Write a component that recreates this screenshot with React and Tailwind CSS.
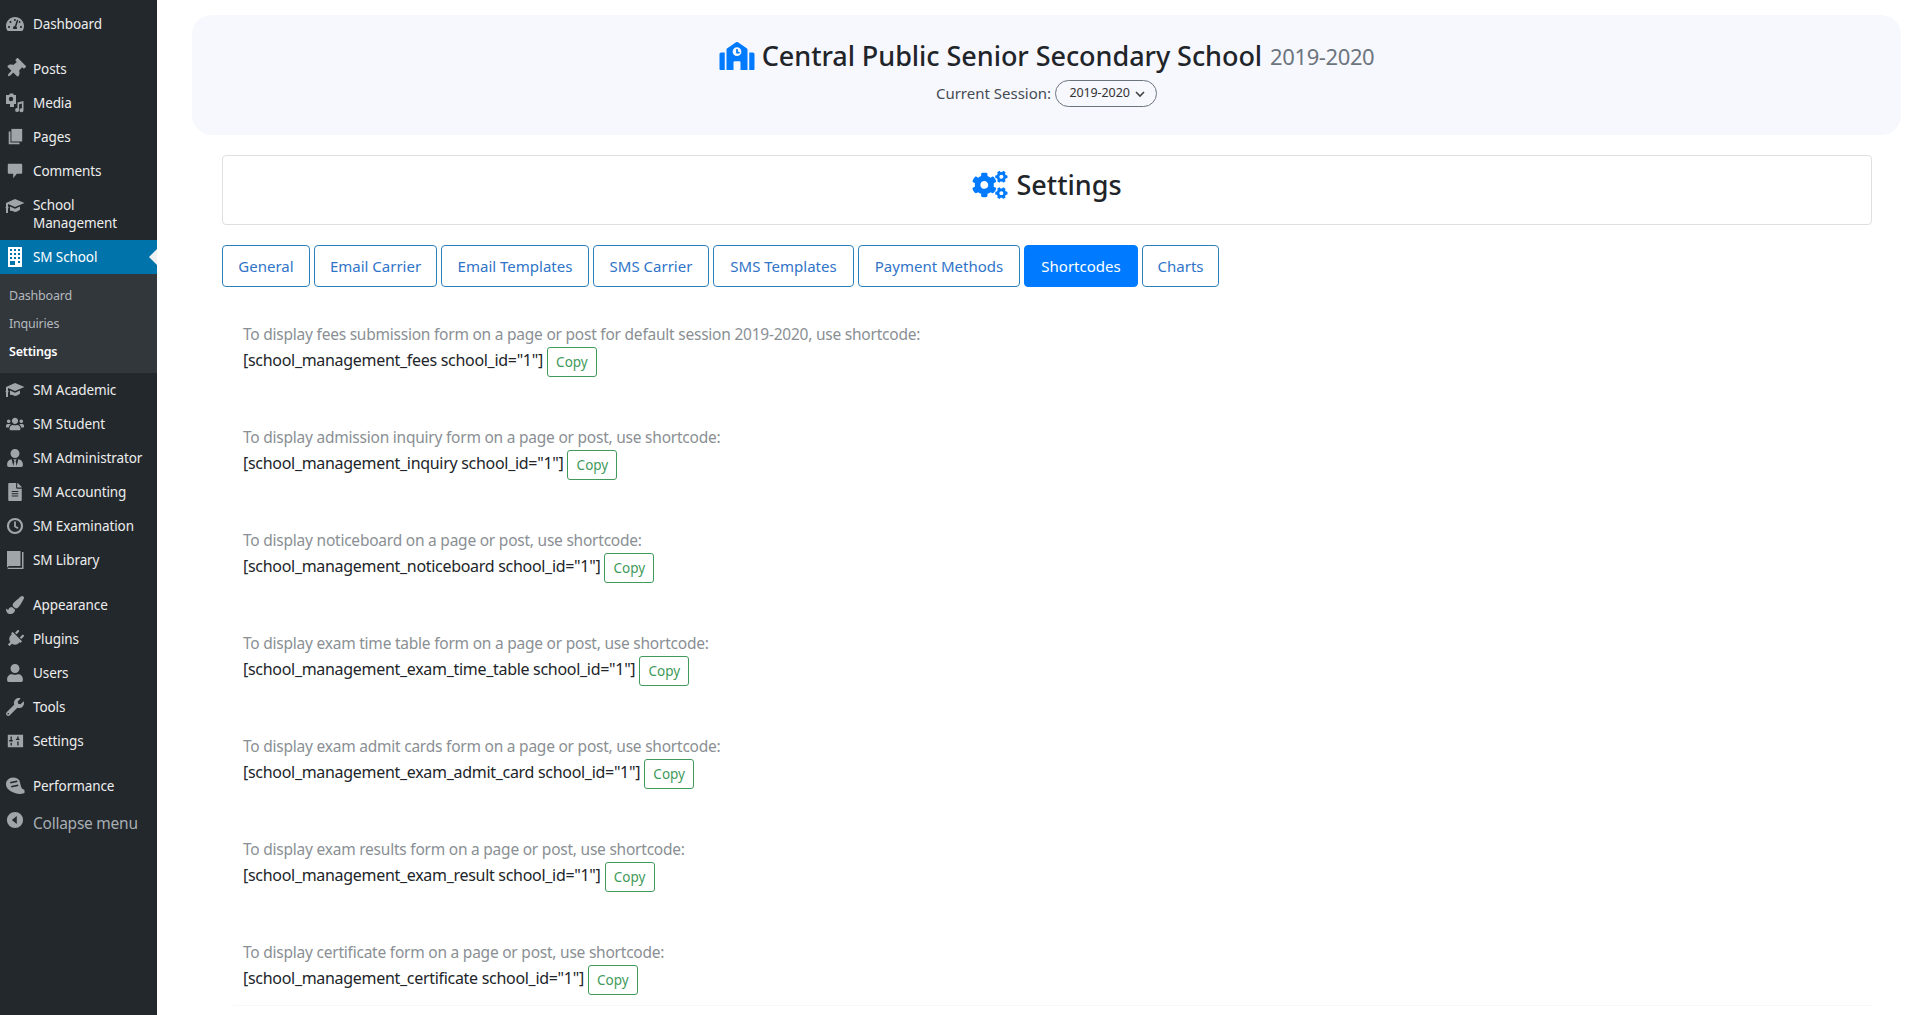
import {
  FaCogs,
  FaFileAlt,
  FaPaintBrush,
  FaPlug,
  FaSchool,
  FaTachometerAlt,
  FaThumbtack,
  FaUser,
  FaUsers,
  FaUserTie,
  FaWrench,
} from "react-icons/fa";

const MediaIcon = ({ className }) => (
  <svg viewBox="0 0 20 20" className={className} fill="currentColor">
    <path d="M1 2h3l1-1.500h3l1 1.500h2v9H9v3H5v-3H1z" />
    <circle cx="6" cy="6" r="2.200" fill="#23282d" />
    <path d="M12.500 9.500l6-1.500v9.200a2 2 0 1 1-1.600-1.900v-4.800l-2.800.7v5.800a2 2 0 1 1-1.600-1.900z" />
  </svg>
);

const PagesIcon = ({ className }) => (
  <svg viewBox="0 0 20 20" className={className} fill="currentColor">
    <path d="M6 1h12v14H6z" />
    <path d="M3 4h2v12h10v2H3z" />
  </svg>
);

const CommentIcon = ({ className }) => (
  <svg viewBox="0 0 20 20" className={className} fill="currentColor">
    <path d="M3 2h14a1 1 0 0 1 1 1v9a1 1 0 0 1-1 1h-5l-4 5v-5H3a1 1 0 0 1-1-1V3a1 1 0 0 1 1-1z" />
  </svg>
);

const CapIcon = ({ className }) => (
  <svg viewBox="0 0 20 20" className={className} fill="currentColor">
    <path d="M10 3l9.500 4-9.500 4-7-3v2.500l.8 1-.8 1v4.500H1v-4.500l-.5-1 .5-1V7z" />
    <path d="M5 10.500l5 2.200 5-2.200v3.300c-1.500 1.300-3.200 2-5 2.200-1.800-.8-3.500-1.200-5-1.200z" />
  </svg>
);

const BuildingIcon = ({ className }) => (
  <svg viewBox="0 0 20 20" className={className} fill="currentColor">
    <path
      fillRule="evenodd"
      d="M3 0h14v20H3zM5 2v2h2V2zm4 0v2h2V2zm4 0v2h2V2zM5 6v2h2V6zm4 0v2h2V6zm4 0v2h2V6zM5 10v2h2v-2zm4 0v2h2v-2zm4 0v2h2v-2zM5 14v4h5v-4zm8 0v2h2v-2z"
    />
  </svg>
);

const ClockIcon = ({ className }) => (
  <svg viewBox="0 0 20 20" className={className} fill="none" stroke="currentColor">
    <circle cx="10" cy="10" r="7.800" strokeWidth="2.400" />
    <path d="M10 5v5.500l3.500 2" strokeWidth="2" />
  </svg>
);

const BookIcon = ({ className }) => (
  <svg viewBox="0 0 20 20" className={className} fill="currentColor">
    <path d="M2 1h13.500v15H4.500C3.500 16 3 16.500 3 17H2z" />
    <path d="M17 2h1.500v17H3.500a1.500 1.500 0 0 1-1.300-1.200H17z" />
  </svg>
);

const SlidersIcon = ({ className }) => (
  <svg viewBox="0 0 20 20" className={className} fill="currentColor">
    <path
      fillRule="evenodd"
      d="M2 3h17v14H2zM5 5v4H3.500v1.500h4V9H6.500V5zm7.500 0v2.500H11V9h4V7.500h-1v-2.500zM5 12v3h1.500v-3zm7.500-1.500V15H14v-4.500z"
    />
  </svg>
);

const PerformanceIcon = ({ className }) => (
  <svg viewBox="0 0 20 20" className={className} fill="currentColor">
    <path d="M1 8c0-3.500 3-6.500 7-6.500 3 0 5 1 6.500 3l1.500 6c.3 1.500 1.500 2.500 3.500 3.500v3c-4 1.500-8 1-11-.5-4.500-2-7.500-4.500-7.500-8.500z" />
    <path d="M5 6l7-1.500.5 1.500-7 1.500zM6 10l7-1.500.5 1.500-7 1.500z" fill="#23282d" />
  </svg>
);

const CollapseIcon = ({ className }) => (
  <svg viewBox="0 0 20 20" className={className} fill="currentColor">
    <path
      fillRule="evenodd"
      d="M10 1a9 9 0 1 1 0 18 9 9 0 0 1 0-18zm2 4.500L6.500 10l5.500 4.500z"
    />
  </svg>
);

const topItems = [
  { label: "Posts", icon: FaThumbtack, size: "w-5 h-5 rotate-45" },
  { label: "Media", icon: MediaIcon, size: "w-5 h-5" },
  { label: "Pages", icon: PagesIcon, size: "w-[18px] h-[18px]" },
  { label: "Comments", icon: CommentIcon, size: "w-[18px] h-[18px]" },
];

const smItems = [
  { label: "SM Academic", icon: CapIcon, size: "w-5 h-5" },
  { label: "SM Student", icon: FaUsers, size: "w-[18px] h-[18px]" },
  { label: "SM Administrator", icon: FaUserTie, size: "w-[18px] h-[18px]" },
  { label: "SM Accounting", icon: FaFileAlt, size: "w-[18px] h-[18px]" },
  { label: "SM Examination", icon: ClockIcon, size: "w-[18px] h-[18px]" },
  { label: "SM Library", icon: BookIcon, size: "w-5 h-5" },
];

const toolItems = [
  { label: "Appearance", icon: FaPaintBrush, size: "w-[18px] h-[18px]" },
  { label: "Plugins", icon: FaPlug, size: "w-[18px] h-[18px] rotate-45" },
  { label: "Users", icon: FaUser, size: "w-[18px] h-[18px]" },
  { label: "Tools", icon: FaWrench, size: "w-[18px] h-[18px]" },
  { label: "Settings", icon: SlidersIcon, size: "w-[18px] h-[18px]" },
];

const tabs = [
  { label: "General", width: "w-[88px]" },
  { label: "Email Carrier", width: "w-[123px]" },
  { label: "Email Templates", width: "w-[148px]" },
  { label: "SMS Carrier", width: "w-[116px]" },
  { label: "SMS Templates", width: "w-[141px]" },
  { label: "Payment Methods", width: "w-[162px]" },
  { label: "Shortcodes", width: "w-[114px]" },
  { label: "Charts", width: "w-[77px]" },
];

const shortcodes = [
  {
    text: "To display fees submission form on a page or post for default session 2019-2020, use shortcode:",
    code: '[school_management_fees school_id="1"]',
  },
  {
    text: "To display admission inquiry form on a page or post, use shortcode:",
    code: '[school_management_inquiry school_id="1"]',
  },
  {
    text: "To display noticeboard on a page or post, use shortcode:",
    code: '[school_management_noticeboard school_id="1"]',
  },
  {
    text: "To display exam time table form on a page or post, use shortcode:",
    code: '[school_management_exam_time_table school_id="1"]',
  },
  {
    text: "To display exam admit cards form on a page or post, use shortcode:",
    code: '[school_management_exam_admit_card school_id="1"]',
  },
  {
    text: "To display exam results form on a page or post, use shortcode:",
    code: '[school_management_exam_result school_id="1"]',
  },
  {
    text: "To display certificate form on a page or post, use shortcode:",
    code: '[school_management_certificate school_id="1"]',
  },
];

const MenuItem = ({ item }) => {
  const Icon = item.icon;
  return (
    <div className="flex h-[34px] items-center text-[13.500px] tracking-[-0.1px] text-[#eeeeee]">
      <span className="flex w-[33px] justify-center pr-[3px] text-[#a0a5aa]">
        <Icon className={item.size} />
      </span>
      {item.label}
    </div>
  );
};

const Sidebar = () => (
  <aside className="flex w-[157px] shrink-0 flex-col bg-[#23282d] pt-[7px]">
    <MenuItem item={{ label: "Dashboard", icon: FaTachometerAlt, size: "w-[18px] h-[18px]" }} />
    <div className="mt-[11px]">
      {topItems.map((item) => (
        <MenuItem key={item.label} item={item} />
      ))}
    </div>
    <div className="flex h-[52px] pt-[8px] text-[13.500px] leading-[18px] tracking-[-0.1px] text-[#eeeeee]">
      <span className="flex h-[18px] w-[33px] justify-center pr-[3px] text-[#a0a5aa]">
        <CapIcon className="h-5 w-5" />
      </span>
      <span>
        School
        <br />
        Management
      </span>
    </div>
    <div className="relative flex h-[34px] items-center bg-[#0073aa] text-[13.500px] tracking-[-0.1px] text-white">
      <span className="flex w-[33px] justify-center pr-[3px]">
        <BuildingIcon className="h-5 w-5" />
      </span>
      SM School
      <span className="absolute right-0 top-[9px] border-y-[8px] border-r-[8px] border-y-transparent border-r-[#f1f1f1]" />
    </div>
    <div className="flex h-[99px] flex-col gap-[10px] bg-[#32373c] pb-[11px] pl-[9px] pt-[13px] text-[12.500px] leading-[18px] tracking-[-0.2px] text-[#b4b9be]">
      <span>Dashboard</span>
      <span>Inquiries</span>
      <span className="font-semibold text-white">Settings</span>
    </div>
    {smItems.map((item) => (
      <MenuItem key={item.label} item={item} />
    ))}
    <div className="mt-[11px]">
      {toolItems.map((item) => (
        <MenuItem key={item.label} item={item} />
      ))}
    </div>
    <div className="mt-[11px]">
      <MenuItem item={{ label: "Performance", icon: PerformanceIcon, size: "w-5 h-5" }} />
    </div>
    <div className="flex h-[34px] items-center pt-[7px] text-[15.500px] tracking-[-0.25px] text-[#a8adb2]">
      <span className="flex w-[33px] justify-center pb-[8px] pr-[3px] text-[#a0a5aa]">
        <CollapseIcon className="h-[18px] w-[18px]" />
      </span>
      Collapse menu
    </div>
  </aside>
);

const Header = () => (
  <div className="flex h-[120px] flex-col items-center rounded-[20px] bg-[#f7f7fe] pt-[21px]">
    <div className="flex h-[40px] items-center text-[#212529]">
      <FaSchool className="mr-[7px] h-[28px] w-[36px] text-[#007bff]" />
      <span className="text-[27px] font-medium tracking-[-0.05px]">Central Public Senior Secondary School</span>
      <span className="ml-2 text-[22px] tracking-[-0.4px] text-[#6c757d]">2019-2020</span>
    </div>
    <div className="mt-[4px] flex items-center text-[15px] text-[#444b52]">
      Current Session:
      <span className="ml-[4px] flex h-[27px] w-[102px] items-center justify-center gap-[4px] rounded-full border border-[#6c757d] pl-[3px] text-[12.500px] tracking-[-0.1px] text-[#333333]">
        2019-2020
        <svg viewBox="0 0 12 12" className="h-3 w-3" fill="none" stroke="#444444" strokeWidth="1.600">
          <path d="M2 4l4 4 4-4" />
        </svg>
      </span>
    </div>
  </div>
);

const Tab = ({ tab, active }) => (
  <button
    className={
      active
        ? `${tab.width} h-[42px] rounded-[4px] border border-[#007bff] bg-[#007bff] text-[15px] text-white`
        : `${tab.width} h-[42px] rounded-[4px] border border-[#2c7fb8] bg-white text-[15px] text-[#2f74c8]`
    }
  >
    {tab.label}
  </button>
);

const ShortcodeRow = ({ row }) => (
  <div className="mb-[36px] h-[67px] last:-ml-[10px] last:border-b last:border-[#f8f8f8] last:pl-[10px]">
    <p className="h-[26px] text-[15.500px] leading-[26px] tracking-[-0.23px] text-[#8a8f94]">{row.text}</p>
    <div className="flex items-center">
      <span className="pb-[4px] text-[16px] tracking-[-0.3px] text-[#212529]">{row.code}</span>
      <button className="ml-[4px] h-[30px] w-[50px] rounded-[3px] border border-[#3f9a5b] pt-[1px] text-[13.500px] text-[#3f9a5b]">
        Copy
      </button>
    </div>
  </div>
);

export default function App() {
  return (
    <div className="flex h-[1015px] overflow-hidden bg-white font-['Noto_Sans',sans-serif]">
      <Sidebar />
      <main className="min-w-0 flex-1 pl-[35px] pr-[16px] pt-[15px]">
        <Header />
        <div className="ml-[30px] mr-[29px]">
          <div className="mt-[20px] flex h-[70px] items-center justify-center rounded-[4px] border border-[#dfdfdf] pb-[10px] text-[#212529]">
            <FaCogs className="mr-[8px] h-[28px] w-[36px] text-[#007bff]" />
            <span className="text-[27px] font-medium">Settings</span>
          </div>
          <div className="mt-[20px] flex gap-[4px]">
            {tabs.map((tab) => (
              <Tab key={tab.label} tab={tab} active={tab.label === "Shortcodes"} />
            ))}
          </div>
          <div className="mt-[34px] pl-[21px]">
            {shortcodes.map((row) => (
              <ShortcodeRow key={row.code} row={row} />
            ))}
          </div>
        </div>
      </main>
    </div>
  );
}
